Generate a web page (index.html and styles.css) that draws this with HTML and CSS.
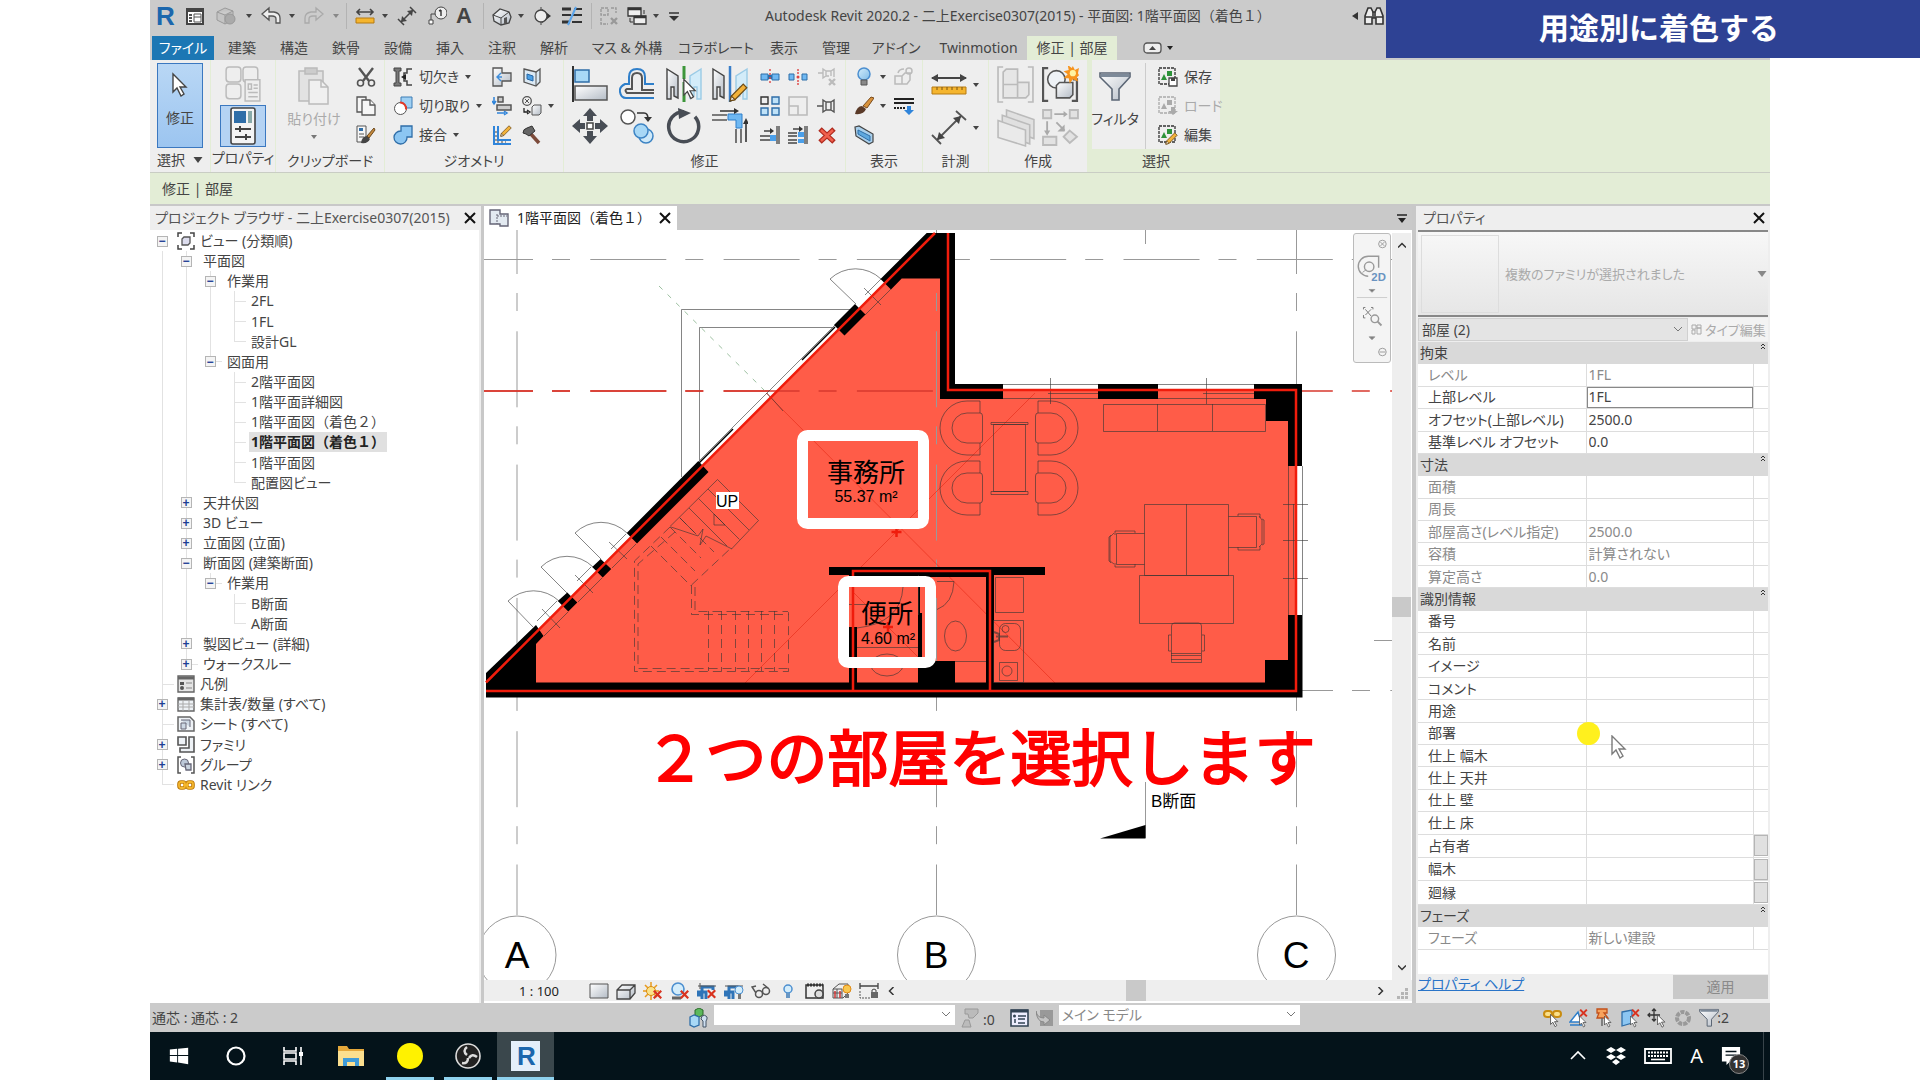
FILE: index.html
```html
<!DOCTYPE html>
<html lang="ja">
<head>
<meta charset="UTF-8">
<meta name="viewport" content="width=device-width, initial-scale=1.0">
<title>Autodesk Revit 2020.2</title>
<link rel="stylesheet" href="styles.css">
</head>
<body>

<!-- Shared icon shapes -->
<svg class="defs" aria-hidden="true">
  <defs>
    <linearGradient id="steel" x1="0" y1="0" x2="1" y2="1"><stop offset="0" stop-color="#fff"/><stop offset="1" stop-color="#b4bcc6"/></linearGradient>
    <linearGradient id="sky" x1="0" y1="0" x2="1" y2="1"><stop offset="0" stop-color="#d4edfb"/><stop offset="1" stop-color="#7fbce8"/></linearGradient>
    <symbol id="cursor" viewBox="0 0 16 24"><path d="M1 1v18l4-4 4 8 3-2-4-7h6z" fill="#fff" stroke="#444" stroke-width="1.4"/></symbol>
    <symbol id="down" viewBox="0 0 6 4"><path d="M0 0h6L3 4z" fill="currentColor"/></symbol>
    <symbol id="upup" viewBox="0 0 6 8"><path d="M1 4l2-2 2 2M1 7l2-2 2 2" fill="none" stroke="#333"/></symbol>
    <symbol id="cross" viewBox="0 0 12 12"><path d="M1 1l10 10M11 1L1 11" stroke="currentColor" stroke-width="2" fill="none"/></symbol>
    <symbol id="redx" viewBox="0 0 12 12"><path d="M1 1l10 10M11 1L1 11" stroke="#d8321f" stroke-width="3"/></symbol>
    <symbol id="pencil" viewBox="0 0 16 16"><path d="M1 15l1-4L12 1l3 3L5 14z" fill="#f2b23a" stroke="#6c4a16"/><path d="M1 15l1-4 3 3z" fill="#fff" stroke="#6c4a16"/></symbol>
    <symbol id="funnel" viewBox="0 0 32 30"><path d="M1 1h30v4L20 17v11h-7V17L1 5z" fill="url(#steel)" stroke="#5b6675" stroke-width="1.6"/><path d="M2 2h28v3H2z" fill="#7d8a99"/></symbol>
    <symbol id="bulb" viewBox="0 0 16 20"><circle cx="8" cy="7" r="6" fill="url(#sky)" stroke="#4c8fd0" stroke-width="1.5"/><path d="M5 13h6v5H5z" fill="#888" stroke="#555"/></symbol>
  </defs>
</svg>

<div class="app">

  <!-- Title bar -->
  <header class="titlebar">
    <nav class="qat" aria-label="クイック アクセス">
      <svg class="logo" viewBox="0 0 24 30"><text x="2" y="24" class="logo-r">R</text></svg>
      <button aria-label="ホーム"><svg viewBox="0 0 20 20"><path d="M2 3h16v15H2z" fill="#fff" stroke="#444" stroke-width="2"/><path d="M2 3h16v3H2z" fill="#444"/><path d="M4 9h3M4 12h3M4 15h3" stroke="#555" stroke-width="2"/><path d="M9 8h7v8H9zM9 11h7" fill="none" stroke="#555"/></svg></button>
      <button aria-label="保存"><svg viewBox="0 0 20 20"><path d="M1 6l8-4 8 3v9l-8 4-8-4zM1 6l8 3 8-4M9 9v9" fill="#c4c4c4" stroke="#999"/><circle cx="14" cy="13" r="5" fill="#aaa" stroke="#999"/></svg></button>
      <button aria-label="保存メニュー" class="arr"><svg><use href="#down"/></svg></button>
      <button aria-label="元に戻す"><svg viewBox="0 0 20 20"><path d="M1 8l7-6v4h5q6 1 6 6v5h-4v-4q0-3-4-3H8v4z" fill="#eee" stroke="#555" stroke-width="1.3"/></svg></button>
      <button aria-label="履歴" class="arr"><svg><use href="#down"/></svg></button>
      <button aria-label="やり直し"><svg viewBox="0 0 20 20"><path d="M19 8l-7-6v4H7q-6 1-6 6v5h4v-4q0-3 4-3h3v4z" fill="#ccc" stroke="#aaa" stroke-width="1.3"/></svg></button>
      <button aria-label="やり直し履歴" class="arr dim"><svg><use href="#down"/></svg></button>
      <span class="sep"></span>
      <button aria-label="計測"><svg viewBox="0 0 20 20"><path d="M2 6h16M5 3L2 6l3 3M15 3l3 3-3 3" fill="none" stroke="#444" stroke-width="1.6"/><path d="M1 12h18v5H1z" fill="#f5b52e" stroke="#b57a12"/></svg></button>
      <button aria-label="計測メニュー" class="arr"><svg><use href="#down"/></svg></button>
      <button aria-label="寸法"><svg viewBox="0 0 20 20"><path d="M4 16L16 4M1 13l6 6M13 1l6 6" stroke="#444" stroke-width="1.5"/><path d="M4 16l1-6 5 5zM16 4l-1 6-5-5z" fill="#444"/></svg></button>
      <button aria-label="タグ"><svg viewBox="0 0 20 20"><circle cx="14" cy="7" r="6" fill="#eee" stroke="#444"/><path d="M14 4v6M12 5l2-1" stroke="#333" stroke-width="1.4"/><path d="M8 8H4v6" fill="none" stroke="#444"/><path d="M2 14h4v4H2z" fill="#fff" stroke="#444"/></svg></button>
      <button aria-label="文字" class="letter">A</button>
      <span class="sep"></span>
      <button aria-label="3D ビュー"><svg viewBox="0 0 20 20"><path d="M1 9l7-6 9 3 2 5-2 6-8 2-7-4z" fill="url(#steel)" stroke="#444" stroke-width="1.3"/><path d="M1 9l8 3 8-6M9 12v7" fill="none" stroke="#444"/><path d="M12 12l3-1v6l-3 1z" fill="#555"/></svg></button>
      <button aria-label="3D メニュー" class="arr"><svg><use href="#down"/></svg></button>
      <button aria-label="断面"><svg viewBox="0 0 20 20"><path d="M9 3l9 7-9 7z" fill="#333"/><circle cx="8" cy="10" r="6" fill="#eee" stroke="#444" stroke-width="1.3"/><path d="M8 1v3M8 16v3" stroke="#444"/></svg></button>
      <button aria-label="細線"><svg viewBox="0 0 20 20"><path d="M0 3h9M0 16h8" stroke="#333" stroke-width="3"/><path d="M0 9h9M12 3h8M11 9h9M10 16h10" stroke="#333" stroke-width="2"/><path d="M14 1L6 19" stroke="#5aa5ec" stroke-width="2"/></svg></button>
      <span class="sep"></span>
      <button aria-label="非表示を閉じる"><svg viewBox="0 0 20 20"><path d="M2 2h7v7H2zM12 2h5v5M2 12v6h7" fill="none" stroke="#999" stroke-width="1.4" stroke-dasharray="3 1"/><path d="M12 12l6 6M18 12l-6 6" stroke="#999" stroke-width="2.4"/></svg></button>
      <button aria-label="ウィンドウ切替"><svg viewBox="0 0 20 20"><path d="M1 2h13v8H1zM7 10h12v8H7z" fill="#eee" stroke="#333" stroke-width="1.3"/><path d="M1 3h13M7 11h12" stroke="#333" stroke-width="2.4"/><path d="M3 12v4h3M17 8V4" fill="none" stroke="#333"/></svg></button>
      <button aria-label="切替メニュー" class="arr"><svg><use href="#down"/></svg></button>
      <button aria-label="カスタマイズ"><svg viewBox="0 0 20 20"><path d="M5 7h10" stroke="#333" stroke-width="1.5"/><path d="M5 10h10l-5 5z" fill="#333"/></svg></button>
    </nav>
    <h1 class="doc-title fw">Autodesk Revit 2020.2 - 二上Exercise0307(2015) - 平面図: 1階平面図（着色１）</h1>
    <div class="search">
      <svg width="6" height="8" viewBox="0 0 6 8"><path d="M6 0v8L0 4z" fill="#333"/></svg>
      <svg width="20" height="20" viewBox="0 0 20 20"><path d="M1 18V10L4 2h3l2 4h2l2-4h3l3 8v8h-7v-6H8v6z" fill="#eee" stroke="#333" stroke-width="1.6"/><path d="M1 11h7M12 11h7M9 6v6M11 6v6" stroke="#333" stroke-width="1.6"/></svg>
    </div>
  </header>

  <!-- Ribbon tabs -->
  <nav class="tabs" aria-label="リボン">
    <button class="file">ファイル</button>
    <button>建築</button><button>構造</button><button>鉄骨</button><button>設備</button><button>挿入</button><button>注釈</button><button>解析</button>
    <button>マス &amp; 外構</button><button>コラボレート</button><button>表示</button><button>管理</button><button>アドイン</button><button>Twinmotion</button>
    <button class="current">修正 | 部屋</button>
    <button class="ribbon-toggle" aria-label="リボン表示"><svg width="30" height="12" viewBox="0 0 30 12"><rect x="1" y="1" width="17" height="10" rx="3" fill="#eee" stroke="#555" stroke-width="1.3"/><path d="M6 8h7L9.500 4z" fill="#444"/><path d="M24 4h6l-3 4z" fill="#222"/></svg></button>
  </nav>

  <!-- Ribbon -->
  <div class="ribbon">
    <section class="panel w60">
      <div class="tools center">
        <button class="modify"><svg width="16" height="26"><use href="#cursor"/></svg><span>修正</span></button>
      </div>
      <h2>選択 <svg class="tri"><use href="#down"/></svg></h2>
    </section>

    <section class="panel w64">
      <div class="tools col2 center">
        <button aria-label="タイプ プロパティ"><svg width="38" height="38" viewBox="0 0 36 36" fill="#eee" stroke="#bbb" stroke-width="1.400"><rect x="2" y="2" width="14" height="14" rx="3"/><rect x="18" y="2" width="14" height="14" rx="3"/><rect x="2" y="18" width="14" height="14" rx="3"/><path d="M20 14h14v20H20z"/><path d="M23 18h3v5h-3zM28 19h4M28 22h4M23 26h9M23 30h9"/></svg></button>
        <button class="on" aria-label="プロパティ"><svg width="26" height="38" viewBox="0 0 26 38"><rect x="1" y="1" width="24" height="36" rx="2" fill="#f4f4f4" stroke="#444" stroke-width="1.600"/><path d="M4 4h12v12H4z" fill="#2f6ea8"/><path d="M18 4h4v12h-4z" fill="#8aa"/><path d="M5 22h16M5 30h16M10 19v6M16 27v6" stroke="#444" stroke-width="2"/></svg></button>
      </div>
      <h2>プロパティ</h2>
    </section>

    <section class="panel w108">
      <div class="tools">
        <button class="paste" disabled><svg width="34" height="38" viewBox="0 0 34 38" fill="#e2e2e2" stroke="#bbb" stroke-width="1.500"><path d="M2 4h24v30H2z"/><path d="M8 1h12v6H8z" fill="#ccc"/><path d="M12 13h12l7 7v17H12z" fill="#f0f0f0"/><path d="M24 13v7h7" fill="none"/></svg><span>貼り付け</span><svg class="tri"><use href="#down"/></svg></button>
        <div class="col w28">
          <button aria-label="切り取り"><svg viewBox="0 0 20 20"><path d="M3 1l10 13M17 1L7 14" stroke="#555" stroke-width="2.400"/><circle cx="4.500" cy="16" r="3" fill="none" stroke="#555" stroke-width="1.600"/><circle cx="15.500" cy="16" r="3" fill="none" stroke="#555" stroke-width="1.600"/></svg></button>
          <button aria-label="コピー"><svg viewBox="0 0 20 20" fill="#f6f6f6" stroke="#555" stroke-width="1.300"><path d="M1 1h9v15H1z"/><path d="M6 4h8l5 5v10H6z"/><path d="M14 4v5h5"/></svg></button>
          <button aria-label="プロパティを一致"><svg viewBox="0 0 20 20"><path d="M1 1h9v16H1z" fill="#f6f6f6" stroke="#555"/><path d="M3 3h4v3H3z" fill="#2f6ea8"/><path d="M3 9h5M3 12h5" stroke="#555"/><path d="M11 11L18 3l1 2-6 8z" fill="#c78b3c" stroke="#6b471b"/><path d="M5 18q1-7 6-7l3 3q-2 5-9 4z" fill="#444"/></svg></button>
        </div>
      </div>
      <h2>クリップボード</h2>
    </section>

    <section class="panel w178 pad8">
      <div class="tools">
        <div class="col w99">
          <button><svg viewBox="0 0 20 20"><path d="M1 1h7v3H6v12h2v3H1v-3h2V4H1z" fill="#777" stroke="#444"/><path d="M19 2h-5v4h-3v8h3v4h5" fill="none" stroke="#444" stroke-width="1.500"/><path d="M8 10l5-3v6z" fill="#222"/></svg>切欠き<svg class="car"><use href="#down"/></svg></button>
          <button><svg viewBox="0 0 20 20"><path d="M8 1h11v11H8z" fill="#9fd0f3" stroke="#3d7db5"/><circle cx="7.500" cy="12.500" r="6" fill="#fff" stroke="#555"/><path d="M7 6.500a6 6 0 0 1 6 7" fill="none" stroke="#e23a2a" stroke-width="2"/></svg>切り取り<svg class="car"><use href="#down"/></svg></button>
          <button><svg viewBox="0 0 20 20"><path d="M8 1h11v11h-5a6.500 6.500 0 1 1-6-6z" fill="#8cc6f2" stroke="#2f6ea8" stroke-width="1.300"/></svg>接合<svg class="car"><use href="#down"/></svg></button>
        </div>
        <div class="col w30">
          <button aria-label="結合"><svg viewBox="0 0 20 20"><path d="M1 1h9v5h9v8h-9v5H1z" fill="url(#steel)" stroke="#555" stroke-width="1.300"/><path d="M9 6l-4 4 4 4M5 10h5" fill="none" stroke="#3c8ddb" stroke-width="1.400"/></svg></button>
          <button aria-label="分割面"><svg viewBox="0 0 20 20"><path d="M2 1v6M0 5l2 3 2-3M5 17h8M12 15l3 2-3 2" fill="none" stroke="#2f84da" stroke-width="1.500"/><path d="M6 1h5v5H6zM5 9h14v5H5z" fill="#ccc" stroke="#555" stroke-width="1.500"/></svg></button>
          <button aria-label="壁結合"><svg viewBox="0 0 20 20"><path d="M2 1v18h17M6 1v14h13" fill="none" stroke="#2f84da" stroke-width="2"/><path d="M4 6v11h10" fill="none" stroke="#444" stroke-dasharray="2 2"/><g transform="translate(8 0) scale(.75)"><use href="#pencil" width="16" height="16"/></g></svg></button>
        </div>
        <div class="col w36">
          <button aria-label="面"><svg viewBox="0 0 20 20"><path d="M2 2l12 3 4-3v13l-4 4-12-4z" fill="#dbe9f4" stroke="#555" stroke-width="1.300"/><path d="M14 5v14" stroke="#555"/><path d="M5 7l6 2v5l-6-2z" fill="#4aa0e6" stroke="#2666a5"/></svg></button>
          <button><svg viewBox="0 0 20 20"><circle cx="5" cy="5" r="4.300" fill="none" stroke="#555" stroke-width="1.300"/><path d="M3 3l4 4M7 3L3 7" stroke="#555"/><path d="M2 12v4h4M5 14l3 2-3 2" fill="none" stroke="#222" stroke-width="1.300"/><path d="M10 11l2-2h7v8l-2 2h-7z" fill="url(#steel)" stroke="#555"/></svg><svg class="car"><use href="#down"/></svg></button>
          <button aria-label="解体"><svg viewBox="0 0 20 20"><path d="M8 8l9 10" stroke="#7c4b3a" stroke-width="3.500"/><path d="M1 8q0-4 4-5l5-2 3 5-6 5-3-2z" fill="#666" stroke="#333"/></svg></button>
        </div>
      </div>
      <h2>ジオメトリ</h2>
    </section>

    <section class="panel w281 pad8">
      <div class="tools">
        <div class="big8">
          <button aria-label="位置合わせ"><svg viewBox="0 0 36 36"><path d="M1 0v36" stroke="#333" stroke-width="2"/><path d="M3 4h14v12H3z" fill="#a8d8f6" stroke="#2f6ea8" stroke-width="1.500"/><path d="M3 20h32v14H3z" fill="url(#steel)" stroke="#555" stroke-width="1.500"/></svg></button>
          <button aria-label="オフセット"><svg viewBox="0 0 36 36"><path d="M35 18h-9v-7q0-8-8-8t-8 8v7H6q-6 3-5 8 1 6 6 6h28" fill="none" stroke="#2f7fca" stroke-width="2"/><path d="M35 24H23V12q0-5-5-5t-5 5v11H8q-3 1 0 4h27" fill="none" stroke="#555" stroke-width="2"/></svg></button>
          <button aria-label="鏡像化 - 軸を選択"><svg viewBox="0 0 36 36"><path d="M1 3l11 7v22l-4-2v-9H5v12H1z" fill="url(#steel)" stroke="#444" stroke-width="1.400"/><path d="M35 3l-11 7v22l4-2v-9h3v12h4z" fill="#d3ecf9" stroke="#9bcbe6" stroke-width="1.400"/><path d="M18 0v36" stroke="#3d963a" stroke-width="3" stroke-dasharray="13 3 20"/><g transform="translate(17 12)"><use href="#cursor" width="14" height="22"/></g></svg></button>
          <button aria-label="鏡像化 - 軸を描画"><svg viewBox="0 0 36 36"><path d="M1 3l11 7v22l-4-2v-9H5v12H1z" fill="url(#steel)" stroke="#444" stroke-width="1.400"/><path d="M35 3l-11 7v22l4-2v-9h3v12h4z" fill="#d3ecf9" stroke="#9bcbe6" stroke-width="1.400"/><path d="M18 0v36" stroke="#3a7fc9" stroke-width="2.500"/><g transform="translate(17 17)"><use href="#pencil" width="19" height="19"/></g></svg></button>
          <button aria-label="移動"><svg viewBox="0 0 36 36"><path d="M18 0l7 8h-4v5h-6V8h-4zM18 36l-7-8h4v-5h6v5h4zM0 18l8-7v4h5v6H8v4zM36 18l-8 7v-4h-5v-6h5v-4z" fill="#484d55"/><path d="M15 15h6v6h-6z" fill="#fff" stroke="#444" stroke-width="1.500"/></svg></button>
          <button aria-label="コピー移動"><svg viewBox="0 0 36 36"><circle cx="9" cy="9" r="7" fill="#fff" stroke="#555" stroke-width="1.500"/><path d="M18 5h7q4 0 4 6" fill="none" stroke="#333" stroke-width="1.600"/><path d="M25 9h8l-4 5z" fill="#333"/><circle cx="27" cy="28" r="7" fill="#cfe9f9" stroke="#3d84c4" stroke-width="1.500"/><circle cx="22" cy="23" r="7" fill="#a8d8f6" stroke="#3d84c4" stroke-width="1.500"/></svg></button>
          <button aria-label="回転"><svg viewBox="0 0 36 36"><path d="M24 5A15 15 0 1 1 12 5" fill="none" stroke="#484d55" stroke-width="3.500" transform="rotate(25 18 18)"/><path d="M12 0l13 5-12 6z" fill="#484d55"/></svg></button>
          <button aria-label="トリム/延長"><svg viewBox="0 0 36 36"><path d="M0 7h15M0 12h15M24 21v14M29 21v14" stroke="#555" stroke-width="1.600"/><path d="M16 6h14v14h-6v-8h-8z" fill="#6fb8f2" stroke="#2f7fca"/><path d="M8 3h16M34 34V14" stroke="#333" stroke-width="1.600"/><path d="M22 0l5 3-5 3zM31 16l3-6 3 6z" fill="#333"/></svg></button>
        </div>
        <div class="col w29">
          <button aria-label="要素を分割"><svg viewBox="0 0 20 20"><path d="M1 7h7v6H1zM12 7h7v6h-7z" fill="#6fb8f2" stroke="#2f6ea8"/><path d="M8 10h4" stroke="#2f6ea8" stroke-width="4"/><path d="M10 2v16" stroke="#d44" stroke-width="1.400" stroke-dasharray="2 2"/></svg></button>
          <button aria-label="配列"><svg viewBox="0 0 20 20" fill="#bfe2f8" stroke="#2f6ea8" stroke-width="1.400"><path d="M1 1h7v7H1z" fill="#eee" stroke="#333"/><path d="M12 1h7v7h-7zM1 12h7v7H1zM12 12h7v7h-7z"/></svg></button>
          <button aria-label="単一要素を延長"><svg viewBox="0 0 20 20"><path d="M0 11h10M0 15h10M17 1v18M19 1v18M4 6h8" stroke="#444" stroke-width="1.300"/><path d="M10 3l4 3-4 3z" fill="#333"/><path d="M10 10h6v6h-6z" fill="#4a9fea"/></svg></button>
        </div>
        <div class="col w30">
          <button aria-label="隙間で分割"><svg viewBox="0 0 20 20"><path d="M1 7h5v6H1zM14 7h5v6h-5z" fill="#6fb8f2" stroke="#2f6ea8"/><circle cx="10" cy="10" r="1.500" fill="#d44"/><path d="M10 2v5M10 13v5" stroke="#d44" stroke-width="1.400" stroke-dasharray="2 1"/></svg></button>
          <button aria-label="尺度"><svg viewBox="0 0 20 20" fill="none" stroke="#bbb" stroke-width="1.600"><path d="M1 1h18v18H1zM1 10h9v9"/></svg></button>
          <button aria-label="複数要素を延長"><svg viewBox="0 0 20 20"><path d="M0 8h9M0 11h9M0 15h9M0 18h9M17 1v18M19 1v18M5 4h8" stroke="#444" stroke-width="1.300"/><path d="M11 1l4 3-4 3z" fill="#333"/><path d="M10 7h6v5h-6zM10 14h6v4h-6z" fill="#4a9fea"/></svg></button>
        </div>
        <div class="col w29">
          <button aria-label="ピン解除"><svg viewBox="0 0 20 20" fill="none" stroke="#bbb" stroke-width="1.400"><path d="M1 6h5V2l3 2h5l3-2v8M6 6v5l3-2h3M9 4v5M14 4v5"/><path d="M12 12l6 6M18 12l-6 6" stroke-width="2.400"/></svg></button>
          <button aria-label="ピン"><svg viewBox="0 0 20 20" fill="none" stroke="#555" stroke-width="1.400"><path d="M0 10h6V4l3 2h5l3-2v12l-3-2H9l-3 2v-6M9 6v8M14 6v8"/></svg></button>
          <button aria-label="削除"><svg viewBox="0 0 20 20"><path d="M3 4l14 13M17 4L3 17" stroke="#b02a1e" stroke-width="5"/><path d="M4 5l12 11M16 5L4 16" stroke="#f0604d" stroke-width="2.500"/></svg></button>
        </div>
      </div>
      <h2>修正</h2>
    </section>

    <section class="panel w76 pad8">
      <div class="tools">
        <div class="col w42">
          <button aria-label="表示"><svg viewBox="0 0 20 20"><use href="#bulb"/></svg><svg class="car"><use href="#down"/></svg></button>
          <button aria-label="上書き"><svg viewBox="0 0 20 20"><path d="M9 10L17 1l3 1-7 10z" fill="#d8923c" stroke="#7a4b1c"/><path d="M1 18q2-8 7-8l4 3q-2 6-11 5z" fill="#5a3a28"/></svg><svg class="car"><use href="#down"/></svg></button>
          <button aria-label="選択ボックス"><svg viewBox="0 0 20 20"><path d="M1 2l4-1 14 8v8l-4 2L2 11z" fill="#a9cfeb" stroke="#444" stroke-width="1.200"/><path d="M4 5l12 6v5L4 9z" fill="#5fa8de" stroke="#2f6ea8"/></svg></button>
        </div>
        <div class="col w30">
          <button aria-label="置換"><svg viewBox="0 0 20 20" fill="none" stroke="#bbb" stroke-width="1.500"><path d="M1 9h7v8H1zM8 9l3-3h5v7l-3 4H8"/><circle cx="15" cy="4" r="3"/><path d="M4 6q1-4 6-4"/></svg></button>
          <button aria-label="線種変更"><svg viewBox="0 0 20 20"><path d="M0 3h20" stroke="#222" stroke-width="2"/><path d="M0 7h20" stroke="#222" stroke-width="2"/><path d="M0 12h12" stroke="#222" stroke-width="2" stroke-dasharray="2 1"/><path d="M13 10h4v4h3l-5 5-5-5h3z" fill="#2f84da"/></svg></button>
          <span></span>
        </div>
      </div>
      <h2>表示</h2>
    </section>

    <section class="panel w65 pad8">
      <div class="tools">
        <div class="col2 measure">
          <button aria-label="2 点間を計測"><svg viewBox="0 0 36 36"><path d="M1 11h34" stroke="#444" stroke-width="2"/><path d="M0 11l7-4v8zM36 11l-7-4v8z" fill="#444"/><path d="M1 20h34v7H1z" fill="#f5b52e" stroke="#b57a12"/><path d="M6 20v3M11 20v3M16 20v3M21 20v3M26 20v3M31 20v3" stroke="#7a5410"/></svg><svg class="car"><use href="#down"/></svg></button>
          <button aria-label="平行寸法"><svg viewBox="0 0 36 36"><path d="M6 30L30 6M1 25l9 9M25 1l10 9" stroke="#555" stroke-width="1.800"/><path d="M6 30l2-8 6 6zM30 6l-2 8-6-6z" fill="#444"/></svg><svg class="car"><use href="#down"/></svg></button>
        </div>
      </div>
      <h2>計測</h2>
    </section>

    <section class="panel w98 pad8">
      <div class="tools">
        <div class="col2 w45">
          <button aria-label="アセンブリ"><svg width="37" height="37" viewBox="0 0 36 36" fill="#e6e6e6" stroke="#bbb" stroke-width="1.600"><path d="M6 1H1v34h5M30 1h5v34h-5" fill="none"/><path d="M6 6l3-3h11v13h11v12l-3 3H6zM6 18h14v13M20 18v-2" /></svg></button>
          <button aria-label="パーツ"><svg width="38" height="38" viewBox="0 0 36 36" fill="#e0e0e0" stroke="#bbb" stroke-width="1.500"><path d="M9 1l26 9v18l-26-9z"/><path d="M5 6l26 9v18L5 24z"/><path d="M1 11l26 9v15L1 27z" fill="#eaeaea"/></svg></button>
        </div>
        <div class="col2 w45">
          <button aria-label="グループを作成"><svg width="37" height="37" viewBox="0 0 36 36"><path d="M6 2H1v32h5M30 13h4v21h-5" fill="none" stroke="#555" stroke-width="2.200"/><circle cx="14" cy="13" r="8.500" fill="#eef2f6" stroke="#555" stroke-width="1.500"/><path d="M14 19l3-3h13v12l-3 3H14z" fill="url(#steel)" stroke="#555" stroke-width="1.500"/><path d="M30 0l2 4 4-2-1 5 1 2-2 2 1 4-5-2-3 4-1-5-5 0 4-4-4-3 5-1-1-5 4 3z" fill="#f7941d"/><circle cx="30" cy="7" r="3" fill="#fff3a0"/></svg></button>
          <button aria-label="類似を作成"><svg width="37" height="37" viewBox="0 0 36 36" fill="#e2e2e2" stroke="#bbb" stroke-width="1.800"><path d="M1 1h8v8H1zM27 1h8v8h-8zM1 27h13v8H1zM27 21l7 6-7 6-6-6z"/><path d="M12 5h11M5 12v11M14 13l8 8" stroke="#aaa"/><path d="M21 2l4 3-4 3zM2 21l3 5 3-5zM22 15v7h-7z" fill="#aaa" stroke="none"/></svg></button>
        </div>
      </div>
      <h2>作成</h2>
    </section>

    <section class="panel last w128">
      <div class="tools">
        <button class="filter"><svg width="32" height="30"><use href="#funnel"/></svg><span>フィルタ</span></button>
        <div class="col selset">
          <button><svg viewBox="0 0 20 20"><path d="M1 1h16v16H1z" fill="none" stroke="#333" stroke-width="1.300" stroke-dasharray="3 1"/><path d="M3 13l3-6 3 6zM9 4h5v5H9z" fill="#2c9239"/><path d="M11 11h8v8h-8z" fill="#fff" stroke="#444" stroke-width="1.300"/><path d="M13 11h4v3h-4z" fill="#444"/></svg>保存</button>
          <button disabled><svg viewBox="0 0 20 20"><path d="M1 1h16v16H1z" fill="none" stroke="#aaa" stroke-width="1.300" stroke-dasharray="3 1"/><path d="M3 13l3-6 3 6zM9 4h5v5H9zM13 11h4v4h3l-5 4-5-4h3z" fill="#aaa"/></svg>ロード</button>
          <button><svg viewBox="0 0 20 20"><path d="M1 1h16v16H1z" fill="none" stroke="#333" stroke-width="1.300" stroke-dasharray="3 1"/><path d="M3 13l3-6 3 6zM9 4h5v5H9z" fill="#2c9239"/><g transform="translate(7 7)"><use href="#pencil" width="13" height="13"/></g></svg>編集</button>
        </div>
      </div>
      <h2>選択</h2>
    </section>
  </div>

  <div class="optionsbar">修正 | 部屋</div>

  <main class="work">

    <!-- Project browser -->
    <aside class="browser">
      <header class="pane-head"><h2>プロジェクト ブラウザ - 二上Exercise0307(2015)</h2><button aria-label="閉じる"><svg class="x"><use href="#cross"/></svg></button></header>
      <ul class="tree">
        <li><i><button>−</button></i><svg class="ti" viewBox="0 0 18 18"><path d="M1 5V1h4M13 1h4v4M17 13v4h-4M5 17H1v-4" fill="none" stroke="#444" stroke-width="1.500"/><path d="M5 7l2-2h6v6l-2 2H5z" fill="#dde" stroke="#555" stroke-width="1.300"/></svg>ビュー (分類順)</li>
        <li><i class="v"></i><i class="v"><button>−</button></i>平面図</li>
        <li><i class="v"></i><i class="v"></i><i class="v"><button>−</button></i>作業用</li>
        <li><i class="v"></i><i class="v"></i><i class="v"></i><i class="v h"></i>2FL</li>
        <li><i class="v"></i><i class="v"></i><i class="v"></i><i class="v h"></i>1FL</li>
        <li><i class="v"></i><i class="v"></i><i class="v"></i><i class="e"></i>設計GL</li>
        <li><i class="v"></i><i class="v"></i><i class="e"><button>−</button></i>図面用</li>
        <li><i class="v"></i><i class="v"></i><i></i><i class="v h"></i>2階平面図</li>
        <li><i class="v"></i><i class="v"></i><i></i><i class="v h"></i>1階平面詳細図</li>
        <li class="fw"><i class="v"></i><i class="v"></i><i></i><i class="v h"></i>1階平面図（着色２）</li>
        <li class="fw"><i class="v"></i><i class="v"></i><i></i><i class="v h"></i><b>1階平面図（着色１）</b></li>
        <li><i class="v"></i><i class="v"></i><i></i><i class="v h"></i>1階平面図</li>
        <li><i class="v"></i><i class="v"></i><i></i><i class="e"></i>配置図ビュー</li>
        <li><i class="v"></i><i class="v"><button>+</button></i>天井伏図</li>
        <li><i class="v"></i><i class="v"><button>+</button></i>3D ビュー</li>
        <li><i class="v"></i><i class="v"><button>+</button></i>立面図 (立面)</li>
        <li><i class="v"></i><i class="v"><button>−</button></i>断面図 (建築断面)</li>
        <li><i class="v"></i><i class="v"></i><i class="e"><button>−</button></i>作業用</li>
        <li><i class="v"></i><i class="v"></i><i></i><i class="v h"></i>B断面</li>
        <li><i class="v"></i><i class="v"></i><i></i><i class="e"></i>A断面</li>
        <li><i class="v"></i><i class="v"><button>+</button></i>製図ビュー (詳細)</li>
        <li><i class="v"></i><i class="e"><button>+</button></i>ウォークスルー</li>
        <li><i class="v h"></i><svg class="ti" viewBox="0 0 18 18"><path d="M1 1h16v16H1z" fill="#e4e4e4" stroke="#666" stroke-width="1.400"/><path d="M1 3h16" stroke="#666" stroke-width="3"/><path d="M3 7h4v3H3z" fill="#555"/><circle cx="5" cy="13" r="2" fill="#555"/><path d="M9 8h6M9 13h6" stroke="#888"/></svg>凡例</li>
        <li><i class="v"><button>+</button></i><svg class="ti" viewBox="0 0 18 18"><path d="M1 3h16v13H1z" fill="#eef2f6" stroke="#666" stroke-width="1.400"/><path d="M1 4h16" stroke="#666" stroke-width="3"/><path d="M1 9h16M1 12h16M6 5v11M12 5v11" stroke="#aaa"/></svg>集計表/数量 (すべて)</li>
        <li><i class="v h"></i><svg class="ti" viewBox="0 0 18 18"><path d="M1 2h12l4 4v10H1z" fill="#eef2f6" stroke="#666" stroke-width="1.500"/><path d="M4 5h9v7M4 8h5v6H4z" fill="#cdd8e4" stroke="#667"/></svg>シート (すべて)</li>
        <li><i class="v"><button>+</button></i><svg class="ti" viewBox="0 0 18 18"><path d="M1 1h8v8H1zM12 1h5v15H3v-4h9z" fill="#eef2f6" stroke="#555" stroke-width="1.600"/></svg>ファミリ</li>
        <li><i class="v"><button>+</button></i><svg class="ti" viewBox="0 0 18 18"><path d="M4 1H1v16h3M14 1h3v16h-3" fill="none" stroke="#555" stroke-width="1.500"/><circle cx="7.500" cy="7" r="4" fill="#bcc8d8" stroke="#667"/><path d="M8 8h6v6H9z" fill="#c8d2de" stroke="#667" stroke-width="1.300"/></svg>グループ</li>
        <li><i class="e"></i><svg class="ti" viewBox="0 0 18 18"><g fill="none" stroke="#b9770b" stroke-width="3.600"><rect x="2" y="6" width="6" height="6" rx="2"/><rect x="10" y="6" width="6" height="6" rx="2"/></g><g fill="none" stroke="#f4b62c" stroke-width="1.800"><rect x="2" y="6" width="6" height="6" rx="2"/><rect x="10" y="6" width="6" height="6" rx="2"/><path d="M6 9h6"/></g></svg>Revit リンク</li>
      </ul>
    </aside>

    <!-- Drawing view -->
    <section class="view">
      <header class="view-tabs">
        <div class="view-tab fw"><svg width="20" height="18" viewBox="0 0 20 18"><path d="M1 1h10v4h8v12h-8v-2H1z" fill="#e3eaf1" stroke="#667" stroke-width="1.400"/><path d="M8 5v10M8 7h10" stroke="#667" stroke-dasharray="2 1"/></svg><span>1階平面図（着色１）</span><button aria-label="タブを閉じる"><svg class="x"><use href="#cross"/></svg></button></div>
        <button aria-label="タブ一覧" class="tab-list"><svg width="10" height="9" viewBox="0 0 10 9"><path d="M0 1h10" stroke="#222" stroke-width="1.500"/><path d="M1 4h8L5 9z" fill="#222"/></svg></button>
      </header>
      <div class="view-body">
        <div class="canvas">
          <svg class="plan" viewBox="484 230 908 750">
            <!-- Grid lines -->
            <g class="grid">
              <path d="M457 259.500H1392M1257 690.500H1392"/>
              <path d="M517 198V915M1296.500 198V915"/>
              <path d="M1145.500 230V244M1145.500 782V838M1374 640.500H1392"/>
            </g>
            <path class="grid red" d="M457 391H1392"/>

            <!-- Balcony -->
            <path class="thin" d="M850 309.500H681.500V477M835 327.500H699.500V462"/>
            <path d="M659 286L767 393" stroke="#9cc0a0" stroke-dasharray="5 7" fill="none"/>

            <!-- Rooms -->
            <path d="M927 233H948V390H1296V691H486V674Z" fill="#fff"/>
            <path d="M935 233H948V390H1296V691H486V682.500Z" fill="#ff5c48"/>
            <path class="grid" d="M936.500 198V915"/>
            <path class="grid red" d="M457 391H936"/>
            <path class="diag" d="M738 690L1035 393M766 393L1062 690M853 592L952 691"/>
            <path class="thin" d="M767 393L783 411"/>

            <!-- Stairs -->
            <g class="thin">
              <path d="M670 526.500L717.500 479.500L758.500 520.500L731.500 549M708 489l41 41M698.500 498.500l41 41M689 508l38 38M679.500 517.500l15 15"/>
              <path d="M671 527l27 9 5-7-3 16 6-9 26 13M714 514v11h11z"/>
              <g stroke-dasharray="9 5">
                <path d="M670 527L634.500 561V671.500H788.500V611.500M675 532L638 564V668.500H788M691.500 585V614.500H788.500M695 587V611.500H788M691.500 585L731 548"/>
                <path d="M708.500 611V671M721.500 611V671M735.500 611V671M748.500 611V671M761.500 611V671M774.500 611V671M661 537l34 34M670 527l31 31M651 546l40 40M680 518l34 34"/>
              </g>
            </g>

            <!-- Walls -->
            <g class="wall">
              <path d="M926.700 233L880.500 279L891 289.500L901.700 278.500H940V399H1003V384H955V233Z"/>
              <path d="M1098 384h60v15h-60zM1254 384H1302V466H1288V421H1266V399H1254Z"/>
              <path d="M486 673L536 625L543.500 636L536 644V682.500H1265V660H1288V615H1302.500V697.500H486Z"/>
              <path d="M834 325l21-21 10.500 10.500-21 21zM698.300 461L626.700 533L637 543.500L708.500 472z"/>
              <path d="M600.700 559l-8.500 8 10.500 10.500 8.500-8.500zM567.300 592.500l-9.500 8.500 10.500 10.500 9-9z"/>
              <path d="M829 567H1045V575H829ZM986 575h8v108h-8zM849 627h8v56h-8zM849 575h140v2H849zM918 575h2v38h2v48h33v22h-37z"/>
            </g>
            <path d="M835 327L802 360M733 429L699 463" stroke="#000" stroke-width="1.500"/>
            <path class="thin" d="M835 325L699 461M881 279L865 295M626 534L611 549M591 567L577 581M557 601L537 621"/>
            <path class="thin" d="M891 289L865 315M636 544L612 568M602 578L578 602M568 612L544 636"/>
            <g class="thin">
              <path d="M856 304L830 279A37 37 0 0 1 881 279M601 559L575 533A37 37 0 0 1 627 533M567 593L541 567A37 37 0 0 1 593 567M533 627L508 601A37 37 0 0 1 559 601"/>
              <path d="M864 288l17 17M609 542l18 17M575 575l18 18M542 609l18 19"/>
              <path d="M1003 384.500h95M1158 384.500h96M1048 393.500h50M1203 393.500h51M1003 398.500h95M1158 398.500h96M1050.500 378v26M1206.500 378v26"/>
              <path d="M1288.500 466v149M1293.500 504v75M1302.500 466v149M1283 504.500h25M1283 540.500h25M1283 578.500h25"/>
            </g>

            <!-- Furniture -->
            <g class="thin">
              <g id="chair"><path d="M980 413V401H967A27 27 0 0 0 967 455H980V443"/><path d="M967 413H980Q982.500 413 982.500 416V440Q982.500 443 980 443H967A15 15 0 0 1 967 413Z"/></g>
              <use href="#chair" y="60"/>
              <use href="#chair" transform="matrix(-1 0 0 1 2018 0)"/>
              <use href="#chair" transform="matrix(-1 0 0 1 2018 60)"/>
              <path d="M993.500 424.500H1025.500V491.500H993.500ZM991 422.500H1028V424.500H991ZM991 491.500H1028V494.500H991Z"/>
              <path d="M1103.500 404.500H1265.500V431.500H1103.500ZM1157.500 404V431M1212.500 404V431"/>
              <path d="M1144.500 504.500H1228.500V575.500H1144.500ZM1186.500 504V575M1139.500 575.500H1233.500V623.500H1139.500Z"/>
              <path d="M1228.500 516.500h28v31h-28M1238 516v-2h22v4M1238 547v3h22v-4M1262 519l2 1v24l-2 1M1259 516l3 4v24l-3 3"/>
              <path d="M1144.500 533.500h-28v31h28M1135 533v-2h-20v4M1135 564v3h-20v-4M1111 535l-2 2v24l2 2M1114 533l-4 4v24l4 3"/>
              <path d="M1171.500 662.500V626q0-3 3-3h24q3 0 3 3v36.500zM1171 653.500h30M1171 655.500h30M1171 659.500h30M1171 635h-2.500v16h2.500M1202 635h2.500v16h-2.500"/>
              <path d="M995.500 577.500h28v35h-28zM993.500 620.500h30v62h-30zM999.500 662.500h18v18h-18z"/>
              <rect x="999.500" y="623.500" width="21" height="27" rx="6"/><circle cx="1005.500" cy="629" r="3.500"/><circle cx="1007" cy="671" r="5"/>
              <path d="M994 632l5 2v6l-5 2M996 636.500h12" stroke-width="2"/>
              <ellipse cx="955.500" cy="636" rx="11" ry="15"/><ellipse cx="887" cy="665" rx="16" ry="11"/>
              <path d="M937 581.500h17q-1 22-17 28M857 647.500h61M955 661.500h31M849 604.500h20M903 587q-2 36-46 41M918.500 575v40"/>
            </g>

            <!-- Room boundaries -->
            <path class="bound" d="M935 233L486 682.500M486 691H1296V390H948V233M853 691V571H990V691"/>
            <path class="bound" d="M891.500 532h10M896.500 527v10M883 627h10M888 622v10"/>

            <!-- Frames and tags -->
            <rect class="frame" x="802.500" y="435.500" width="121" height="88" rx="5"/>
            <rect class="frame" x="843.500" y="581.500" width="87" height="81" rx="5"/>
            <text class="tag" x="866" y="482">事務所</text>
            <text class="area" x="866" y="502">55.37 m²</text>
            <text class="tag" x="887" y="623">便所</text>
            <text class="area" x="888" y="644">4.60 m²</text>
            <rect x="716" y="492" width="23" height="17" fill="#fff"/>
            <text class="up" x="727" y="507">UP</text>

            <!-- Grid bubbles -->
            <g fill="#fff" stroke="#999"><circle cx="517" cy="955" r="39"/><circle cx="936.500" cy="955" r="39"/><circle cx="1296.500" cy="955" r="39"/></g>
            <text class="bubble" x="517" y="968">A</text>
            <text class="bubble" x="936" y="968">B</text>
            <text class="bubble" x="1296" y="968">C</text>
            <path d="M1100 838.500L1145.500 825V838.500Z"/>
            <text class="section" x="1151" y="807">B断面</text>
            <text class="caption" x="980" y="781">２つの部屋を選択します</text>
          </svg>
          <div class="navbar">
            <svg viewBox="0 0 38 130" width="36" height="128" fill="none" stroke="#999">
              <circle cx="30" cy="8" r="4"/><path d="M28 6l4 4M32 6l-4 4"/>
              <path d="M15 42a10 10 0 1 1 0-21h11v12" stroke-width="1.500"/><circle cx="16" cy="32" r="5" stroke-width="1.500"/><path d="M9 38l4-3" />
              <text x="26" y="47" class="two-d">2D</text>
              <path d="M16 56h6l-3 3z" fill="#777"/><path d="M3 64.500h32" stroke="#ccc"/>
              <path d="M10 77v-2h2M18 75h2v2M10 83v3h2M12 77l6 7M18 77l-6 6" stroke="#777"/><circle cx="22" cy="87" r="4" stroke-width="1.500"/><path d="M25 90l4 4" stroke-width="2"/>
              <path d="M16 106h6l-3 3z" fill="#777"/><circle cx="30" cy="122" r="4"/><path d="M27 122h6"/>
            </svg>
          </div>
        </div>
        <div class="vscroll"><svg viewBox="0 0 8 5"><path d="M0 5l4-4 4 4"/></svg><span></span><svg viewBox="0 0 8 5"><path d="M0 0l4 4 4-4"/></svg></div>
      </div>
      <footer class="viewbar">
        <span class="scale">1 : 100</span>
        <div class="view-icons">
          <svg viewBox="0 0 20 18"><path d="M1 2h18v14H1z" fill="url(#steel)" stroke="#555"/></svg>
          <svg viewBox="0 0 20 18"><path d="M1 8l5-5h13v8l-5 6H1zM1 8h13v9M14 8l5-5" fill="url(#steel)" stroke="#444" stroke-width="1.300"/></svg>
          <svg viewBox="0 0 20 18"><path d="M8 0v18M0 9h16M2 3l12 12M14 3L2 15" stroke="#e89a1c" stroke-width="1.500"/><circle cx="8" cy="9" r="4.500" fill="#fbe38a" stroke="#d98c10"/><use href="#redx" x="10" y="8" width="9" height="9"/></svg>
          <svg viewBox="0 0 20 18"><circle cx="8" cy="7" r="6" fill="#d4edfb" stroke="#4c8fd0" stroke-width="1.600"/><path d="M2 16h9" stroke="#666" stroke-width="3"/><use href="#redx" x="10" y="8" width="9" height="9"/></svg>
          <svg viewBox="0 0 20 18"><path d="M5 17V5h11v3M0 10h9v7M0 13h5" fill="none" stroke="#2f74b8" stroke-width="3"/><path d="M3 1v6M1 4h18" stroke="#555"/><use href="#redx" x="10" y="7" width="9" height="10"/></svg>
          <svg viewBox="0 0 20 18"><path d="M5 17V5h8v3M0 10h9v7M0 13h5" fill="none" stroke="#2f74b8" stroke-width="3"/><path d="M1 4h18" stroke="#555"/><circle cx="15" cy="8" r="4" fill="#d4edfb" stroke="#4c8fd0"/><path d="M14 12h3v5h-3z" fill="#777"/></svg>
          <svg viewBox="0 0 20 18" fill="none" stroke="#555" stroke-width="1.500"><circle cx="8" cy="12" r="3.500"/><circle cx="15" cy="9" r="3.500"/><path d="M5 11L1 5l4-1M17 6l-5-4"/></svg>
          <svg viewBox="0 0 20 18"><circle cx="10" cy="7" r="4" fill="#d4edfb" stroke="#4c8fd0" stroke-width="1.500"/><path d="M8 11h4v5H8z" fill="#6796c4"/></svg>
          <svg viewBox="0 0 20 18"><path d="M1 3h17v13H1z" fill="#eee" stroke="#333" stroke-width="1.500"/><path d="M2 3h16" stroke="#333" stroke-width="3" stroke-dasharray="2 1"/><circle cx="14" cy="12" r="4" fill="#ddd" stroke="#444" stroke-width="1.500"/></svg>
          <svg viewBox="0 0 20 18"><path d="M1 7l6-5h9v9l-5 5H1zM1 7h9v9M5 7v9M1 11h9" fill="#eee" stroke="#555"/><path d="M3 9v7M8 9v7" stroke="#c33" stroke-width="1.500"/><circle cx="15" cy="7" r="4" fill="#f9c74f" stroke="#e08b17"/><path d="M13 12h4v4h-4z" fill="#777"/></svg>
          <svg viewBox="0 0 20 18"><path d="M1 1v6M19 1v6M1 4h18" stroke="#444" stroke-width="1.300"/><path d="M1 9v7h10" fill="none" stroke="#555" stroke-dasharray="2 1"/><path d="M12 10h7v6h-7z" fill="#666"/><path d="M13 10V8q2-2 4 0v2" fill="none" stroke="#444"/></svg>
        </div>
        <div class="hscroll"><svg viewBox="0 0 5 8"><path d="M5 0L1 4l4 4"/></svg><span></span><svg viewBox="0 0 5 8"><path d="M0 0l4 4-4 4"/></svg></div>
        <svg class="grip" width="11" height="11" viewBox="0 0 11 11"><path d="M8 0h3v3H8zM4 4h3v3H4zM8 4h3v3H8zM0 8h3v3H0zM4 8h3v3H4zM8 8h3v3H8z" fill="#b5b5b5"/></svg>
      </footer>
    </section>

    <!-- Properties -->
    <aside class="props">
      <header class="pane-head"><h2>プロパティ</h2><button aria-label="閉じる"><svg class="x"><use href="#cross"/></svg></button></header>
      <button class="type-selector" disabled><span class="thumb"></span><span class="type-name">複数のファミリが選択されました</span><svg class="tri"><use href="#down"/></svg></button>
      <div class="filter-row">
        <select aria-label="カテゴリ"><option>部屋 (2)</option></select>
        <button disabled><svg width="11" height="11" viewBox="0 0 11 11" fill="none" stroke="#aaa"><path d="M1 1h4v4H1zM6 1h4v3H6zM1 6h3v4H1zM6 4v6h4V4z"/></svg>タイプ編集</button>
      </div>
      <div class="prop-list">
        <table>
          <colgroup><col class="c-name"><col><col class="c-btn"></colgroup>
          <tbody>
            <tr class="group"><th colspan="2">拘束</th><td><svg><use href="#upup"/></svg></td></tr>
            <tr class="off"><th>レベル</th><td>1FL</td><td></td></tr>
            <tr><th><label for="p1">上部レベル</label></th><td class="active"><input id="p1" value="1FL"></td><td></td></tr>
            <tr><th><label for="p2">オフセット(上部レベル)</label></th><td><input id="p2" value="2500.0"></td><td></td></tr>
            <tr><th><label for="p3">基準レベル オフセット</label></th><td><input id="p3" value="0.0"></td><td></td></tr>
            <tr class="group"><th colspan="2">寸法</th><td><svg><use href="#upup"/></svg></td></tr>
            <tr class="off"><th>面積</th><td></td><td></td></tr>
            <tr class="off"><th>周長</th><td></td><td></td></tr>
            <tr class="off"><th>部屋高さ(レベル指定)</th><td>2500.0</td><td></td></tr>
            <tr class="off"><th>容積</th><td>計算されない</td><td></td></tr>
            <tr class="off"><th>算定高さ</th><td>0.0</td><td></td></tr>
            <tr class="group"><th colspan="2">識別情報</th><td><svg><use href="#upup"/></svg></td></tr>
            <tr><th><label for="p4">番号</label></th><td><input id="p4"></td><td></td></tr>
            <tr><th><label for="p5">名前</label></th><td><input id="p5"></td><td></td></tr>
            <tr><th><label for="p6">イメージ</label></th><td><input id="p6"></td><td></td></tr>
            <tr><th><label for="p7">コメント</label></th><td><input id="p7"></td><td></td></tr>
            <tr><th><label for="p8">用途</label></th><td><input id="p8"></td><td></td></tr>
            <tr><th><label for="p9">部署</label></th><td><input id="p9"></td><td></td></tr>
            <tr><th><label for="p10">仕上 幅木</label></th><td><input id="p10"></td><td></td></tr>
            <tr><th><label for="p11">仕上 天井</label></th><td><input id="p11"></td><td></td></tr>
            <tr><th><label for="p12">仕上 壁</label></th><td><input id="p12"></td><td></td></tr>
            <tr><th><label for="p13">仕上 床</label></th><td><input id="p13"></td><td></td></tr>
            <tr><th><label for="p14">占有者</label></th><td><input id="p14"></td><td><button class="assoc" aria-label="占有者を関連付け"></button></td></tr>
            <tr><th><label for="p15">幅木</label></th><td><input id="p15"></td><td><button class="assoc" aria-label="幅木を関連付け"></button></td></tr>
            <tr><th><label for="p16">廻縁</label></th><td><input id="p16"></td><td><button class="assoc" aria-label="廻縁を関連付け"></button></td></tr>
            <tr class="group"><th colspan="2">フェーズ</th><td><svg><use href="#upup"/></svg></td></tr>
            <tr class="off"><th>フェーズ</th><td>新しい建設</td><td></td></tr>
          </tbody>
        </table>
      </div>
      <footer class="props-foot"><a href="#help">プロパティ ヘルプ</a><button disabled>適用</button></footer>
      <!-- Pointer highlight -->
      <span class="spot"></span>
      <svg class="pointer"><use href="#cursor"/></svg>
    </aside>
  </main>

  <!-- Status bar -->
  <footer class="status">
    <span class="status-text">通芯 : 通芯 : 2</span>
    <svg width="20" height="20" viewBox="0 0 20 20"><path d="M6 2l4-2 4 2v5l-4 2-4-2z" fill="#5cb85c" stroke="#2a6b2a"/><path d="M1 9l4-2 5 2v8l-5 2-4-2z" fill="#a8d8f6" stroke="#2f6ea8" stroke-width="1.300"/><path d="M13 8q3-2 5 1v2l-1 2v6h-3v-6l-2-2z" fill="#cfe0f2" stroke="#456"/></svg>
    <select class="workset" aria-label="ワークセット"><option></option></select>
    <svg width="18" height="20" viewBox="0 0 18 20"><path d="M4 1h13v4l-5 5H8L7 6H4zM1 19l3-7h4l2 7z" fill="#bbb" stroke="#999"/></svg>
    <span class="count">:0</span>
    <svg class="mid" width="19" height="20" viewBox="0 0 19 20"><path d="M1 2h17v16H1z" fill="#eef" stroke="#345" stroke-width="1.600"/><path d="M1 3h17" stroke="#345" stroke-width="3"/><circle cx="4.500" cy="8" r="1.500" fill="#345"/><path d="M8 8h8M8 11h7M8 15h7M5 11v4" stroke="#345" stroke-width="1.500"/></svg>
    <svg width="18" height="18" viewBox="0 0 18 18"><path d="M4 1h13v16H4z" fill="#999"/><path d="M0 2q1 7 8 7V6l6 5-6 5v-3Q1 13 0 2z" fill="#c4c4c4" stroke="#888"/></svg>
    <select class="option-set" aria-label="デザイン オプション"><option>メイン モデル</option></select>
    <div class="sel-icons">
      <svg viewBox="0 0 20 20"><rect x="1" y="3" width="8" height="6" rx="3" fill="#fbe08a" stroke="#c98c10" stroke-width="2"/><rect x="10" y="3" width="8" height="6" rx="3" fill="#fbe08a" stroke="#c98c10" stroke-width="2"/><use href="#cursor" x="7" y="5" width="9" height="15"/></svg>
      <svg viewBox="0 0 20 20"><path d="M1 14L9 4l3 10zM1 17h12" fill="#fff" stroke="#2f7fca" stroke-width="1.500"/><use href="#redx" x="10" y="1" width="9" height="8"/><use href="#cursor" x="10" y="7" width="8" height="13"/></svg>
      <svg viewBox="0 0 20 20"><path d="M2 1h10v4H9l4 5H2l2-5H2z" fill="#f7a35c" stroke="#c2501a" stroke-width="1.300"/><path d="M7 10v8" stroke="#666" stroke-width="1.500"/><use href="#cursor" x="9" y="7" width="8" height="13"/></svg>
      <svg viewBox="0 0 20 20"><path d="M1 4l10-2v13L1 18z" fill="#8cc6f2" stroke="#2f6ea8" stroke-width="1.300"/><use href="#redx" x="10" y="1" width="9" height="8"/><use href="#cursor" x="9" y="7" width="8" height="13"/></svg>
      <svg viewBox="0 0 20 20"><path d="M7 1v12M1 7h12M5 3l2-2 2 2M5 11l2 2 2-2M3 5L1 7l2 2" fill="none" stroke="#333" stroke-width="1.300"/><use href="#cursor" x="10" y="6" width="9" height="14"/></svg>
      <svg viewBox="0 0 20 20"><circle cx="10" cy="10" r="6" fill="none" stroke="#999" stroke-width="4" stroke-dasharray="4 1"/></svg>
      <svg viewBox="0 0 32 30"><use href="#funnel"/></svg>
      <span>:2</span>
    </div>
  </footer>

  <!-- Windows taskbar -->
  <footer class="taskbar">
    <button aria-label="スタート"><svg viewBox="0 0 24 24" width="22" height="22" fill="#fff"><path d="M2 5l8-1v7H2zM11 4l11-1v8H11zM2 12h8v7l-8-1zM11 12h11v9l-11-2z"/></svg></button>
    <button aria-label="Cortana"><svg viewBox="0 0 24 24" width="24" height="24"><circle cx="12" cy="12" r="8.500" fill="none" stroke="#fff" stroke-width="2.200"/></svg></button>
    <button aria-label="タスク ビュー"><svg viewBox="0 0 24 24" width="24" height="24" fill="none" stroke="#fff" stroke-width="1.600"><path d="M3 3v4h12V3M3 21v-4h12v4M3 9h12v6H3zM20 3v18"/><path d="M18 8h4v4h-4z" fill="#fff" stroke="none"/></svg></button>
    <button class="folder" aria-label="エクスプローラー"><svg viewBox="0 0 28 24" width="28" height="24"><path d="M1 2h9l2 3h15v17H1z" fill="#e5a83b"/><path d="M1 7h26v15H1z" fill="#fbdf8f"/><path d="M6 14h16v8h-4v-4h-8v4H6z" fill="#3f9bd8"/></svg></button>
    <button class="open" aria-label="録画"><svg viewBox="0 0 28 28" width="28" height="28"><circle cx="14" cy="14" r="13" fill="#fff200"/></svg></button>
    <button class="open" aria-label="OBS"><svg viewBox="0 0 28 28" width="28" height="28"><circle cx="14" cy="14" r="12" fill="#222" stroke="#ddd" stroke-width="1.600"/><path d="M13 5q-5 4 0 8M23 15q-5-4-8 1M8 21q6 1 6-5" fill="none" stroke="#ddd" stroke-width="2.500"/></svg></button>
    <button class="open active" aria-label="Revit"><span class="revit-tile"><svg viewBox="0 0 24 30" width="24" height="30"><text x="3" y="24" class="logo-r">R</text></svg></span></button>
    <div class="tray">
      <svg viewBox="0 0 20 20"><path d="M3 13l7-7 7 7" fill="none" stroke="#fff" stroke-width="1.600"/></svg>
      <svg viewBox="0 0 20 20" fill="#fff"><path d="M5 1l5 3-5 3-5-3zM15 1l5 3-5 3-5-3zM5 8l5 3-5 3-5-3zM15 8l5 3-5 3-5-3zM10 13l4 3-4 3-4-3z"/></svg>
      <svg class="kbd" viewBox="0 0 28 20"><path d="M1 3h26v14H1z" fill="none" stroke="#fff" stroke-width="1.800"/><path d="M4 6.500h20M4 10h20" stroke="#fff" stroke-width="2" stroke-dasharray="2 1"/><path d="M7 13.500h14" stroke="#fff" stroke-width="1.600"/></svg>
      <span>A</span>
      <div class="notice"><svg viewBox="0 0 22 22"><path d="M1 1h20v16H10l-4 4v-4H1z" fill="#fff"/><path d="M5 6h12M5 10h12" stroke="#04131a" stroke-width="1.500"/></svg><b>13</b></div>
    </div>
  </footer>
</div>

<div class="banner">用途別に着色する</div>

</body>
</html>
```

FILE: styles.css
```css
* { box-sizing: border-box; }
body {
  margin: 0;
  background: #fff;
  color: #444;
  font: 14px/20px "Noto Sans", "Noto Sans CJK JP", sans-serif;
  font-feature-settings: "palt"; /* proportional kana */
}
h1, h2 { margin: 0; font-size: 14px; font-weight: 400; }
button {
  padding: 0;
  border: 0;
  background: none;
  color: inherit;
  font: inherit;
  font-feature-settings: inherit;
}
svg { flex: none; }
.defs { position: absolute; width: 0; height: 0; }
.fw { font-feature-settings: normal; }

.app {
  display: flex;
  flex-direction: column;
  height: 100vh;
  margin: 0 150px;
  background: #cbcbcb;
  overflow: hidden;
}

/* Title bar */
.titlebar {
  display: flex;
  align-items: center;
  height: 32px;
}
.qat {
  display: grid;
  grid-template-columns: 32px 26px 36px 10px 34px 8px 36px 8px 12px 26px 14px 30px 30px 24px 14px 24px 14px 30px 28px 10px 26px 30px 8px 28px;
  place-items: center;
}
.qat button { display: flex; align-items: center; justify-content: center; }
.qat svg { width: 20px; height: 20px; }
.qat .logo { width: 24px; height: 30px; }
.qat .arr svg { width: 6px; height: 4px; }
.qat .dim { color: #888; }
.qat .sep { width: 1px; height: 26px; background: #b3b3b3; }
.qat .letter { font: bold 22px/24px "Liberation Sans", sans-serif; }
.logo-r { font: bold 26px/26px "Liberation Sans", sans-serif; fill: #1c67ad; }
.doc-title { flex: 1; padding-left: 77px; line-height: 26px; white-space: nowrap; }
.search { display: flex; align-items: center; gap: 6px; margin-right: 386px; }

/* Ribbon tabs */
.tabs {
  display: grid;
  grid-template-columns: 64px repeat(7, 52px) 94px 84px 52px 52px 68px 97px 90px 82px;
  align-items: end;
  height: 28px;
  padding-left: 2px;
  white-space: nowrap;
}
.tabs button { height: 24px; }
.tabs .file { width: 62px; background: #1c77b4; color: #fff; }
.tabs .current { background: #e3edd6; }
.ribbon-toggle { display: flex; align-items: center; justify-content: center; }

/* Ribbon */
.ribbon {
  display: flex;
  gap: 1px;
  height: 113px;
  background: #e3edd6;
  border-bottom: 1px solid #c9cdc4;
}
.panel {
  display: flex;
  flex-direction: column;
  background: #eee;
}
.panel h2 {
  display: flex;
  align-items: center;
  justify-content: center;
  gap: 8px;
  height: 24px;
  white-space: nowrap;
}
.tools { display: flex; height: 89px; padding-top: 3px; }
.tools.center { align-items: center; justify-content: center; }
.w28 { width: 28px; } .w29 { width: 29px; } .w30 { width: 30px; } .w36 { width: 36px; }
.w42 { width: 42px; } .w45 { width: 45px; } .w99 { width: 99px; }
.w60 { width: 60px; } .w64 { width: 64px; } .w65 { width: 65px; } .w76 { width: 76px; }
.w98 { width: 98px; } .w108 { width: 108px; } .w128 { width: 128px; }
.w178 { width: 178px; } .w281 { width: 281px; }
.pad8 .tools { padding-left: 8px; }
.tri { width: 10px; height: 6px; }
.car { width: 6px; height: 4px; }
.modify {
  display: flex;
  flex-direction: column;
  align-items: center;
  gap: 10px;
  width: 46px;
  height: 85px;
  padding-top: 8px;
  background: linear-gradient(#b9d7f5, #9cc5f0);
  border: 1px solid #3b78c0;
}
.paste, .filter {
  display: flex;
  flex-direction: column;
  align-items: center;
  width: 64px;
  margin-left: 6px;
  padding-top: 4px;
  gap: 4px;
}
.paste { color: #aaa; }
.paste .tri { width: 6px; height: 4px; margin-top: 2px; color: #777; }
.filter { width: 46px; margin: 0; gap: 7px; padding-top: 9px; white-space: nowrap; }
.col, .col2 { display: flex; flex-direction: column; height: 86px; }
.paste + .col { margin-left: 10px; }
.col > *, .col2 > * { flex: 1; display: flex; align-items: center; gap: 6px; white-space: nowrap; }
.col svg:first-child { width: 20px; height: 20px; }
.tools.col2 { align-items: center; }
.tools.col2 > * { flex: none; width: 46px; height: 42px; justify-content: center; }
.on { background: #b5d3f3; border: 1px solid #3b78c0; }
.big8 {
  display: grid;
  grid-template-columns: 47px 47px 46px 48px;
  grid-template-rows: 42px 42px;
  align-items: center;
}
.big8 svg, .measure svg:first-child { width: 36px; height: 36px; }
.big8 button { text-align: left; line-height: 0; }
.last { margin-left: 4px; background: none; }
.last .tools { background: #eee; }
.selset { margin-left: 7px; padding-left: 12px; border-left: 1px solid #ccc; }
.selset button:disabled { color: #aaa; }

.optionsbar {
  height: 31px;
  padding: 6px 12px 0;
  background: #e3edd6;
}

/* Work area */
.work {
  display: flex;
  flex: 1;
  min-height: 0;
  padding-top: 2px;
  background: #c8c8c8;
}
.pane-head {
  display: flex;
  align-items: center;
  justify-content: space-between;
  height: 24px;
  padding: 0 3px 0 5px;
  background: #eee;
  white-space: nowrap;
}
.pane-head h2 { color: #555; }
.x { width: 12px; height: 12px; color: #111; display: block; }

.browser { width: 331px; background: #fff; border-right: 2px solid #eee; }
.tree {
  display: flex;
  flex-direction: column;
  height: 564px;
  margin: 1px 0 0;
  padding: 0;
  list-style: none;
}
.tree li { display: flex; flex: 1; align-items: center; white-space: nowrap; line-height: 20px; }
.tree i {
  display: flex;
  align-items: center;
  justify-content: center;
  align-self: stretch;
  flex: none;
  width: 24px;
}
.tree i:last-of-type { margin-right: 5px; }
.tree i:has(+ .ti) { margin-right: 3px; }
.tree .v { background: linear-gradient(#e2e2e2, #e2e2e2) 12px 0 / 1px 100% no-repeat; }
.tree .h { background: linear-gradient(#e2e2e2, #e2e2e2) 12px 0 / 1px 100% no-repeat, linear-gradient(#e2e2e2, #e2e2e2) 12px 50% / 12px 1px no-repeat; }
.tree .e { background: linear-gradient(#e2e2e2, #e2e2e2) 12px 0 / 1px 50% no-repeat, linear-gradient(#e2e2e2, #e2e2e2) 12px 50% / 12px 1px no-repeat; }
.tree button {
  width: 11px;
  height: 11px;
  border: 1px solid #b5b5b5;
  background: #f4f4f4;
  color: #1c3f94;
  font: bold 12px/8px "Liberation Sans", sans-serif;
}
.tree .ti { width: 18px; height: 18px; margin-right: 5px; }
.tree b { margin-left: -2px; padding: 0 2px; background: #e0e0e0; color: #222; }

/* Drawing view */
.view {
  display: flex;
  flex: 1;
  flex-direction: column;
  min-width: 0;
  margin: 0 4px 0 3px;
  background: #fff;
}
.view-tabs { display: flex; justify-content: space-between; align-items: center; height: 24px; background: #c9c9c9; }
.view-tab {
  display: flex;
  align-items: center;
  gap: 8px;
  height: 24px;
  padding: 0 6px 0 5px;
  background: #fff;
  color: #222;
  white-space: nowrap;
}
.tab-list { margin-right: 5px; }
.view-body { display: flex; flex: 1; min-height: 0; }
.canvas { position: relative; flex: 1; min-width: 0; }
.plan { display: block; width: 100%; height: 100%; }
.navbar {
  position: absolute;
  top: 3px;
  right: 1px;
  height: 130px;
  border: 1px solid #bbb;
  border-radius: 3px;
  background: #f4f4f4;
}
.two-d { font: bold 12px "Liberation Sans", sans-serif; fill: #6a93c0; stroke: none; text-anchor: middle; }
.vscroll {
  display: flex;
  flex-direction: column;
  align-items: center;
  justify-content: space-between;
  width: 19px;
  margin: 3px 1px 0 0;
  padding: 8px 0;
  background: #eee;
}
.vscroll span { width: 19px; height: 20px; background: #c9c9c9; }
.vscroll svg, .hscroll svg { width: 8px; height: 8px; fill: none; stroke: #333; stroke-width: 1.5; }

/* Dashes: long, gap, short, gap */
.grid { fill: none; stroke: #999; stroke-dasharray: 76 19 18 20.3; }
.grid.red { stroke: #d8392e; stroke-width: 1.5; }
.thin { fill: none; stroke: #333; stroke-width: 1; stroke-opacity: .6; }
.diag { fill: none; stroke: #e8301c; stroke-opacity: .7; }
.wall { fill: #000; }
.bound { fill: none; stroke: #f01c0c; stroke-width: 2.5; }
.frame { fill: none; stroke: #fff; stroke-width: 11; }
.plan text { text-anchor: middle; font-family: "Liberation Sans", "Noto Sans CJK JP", sans-serif; }
.plan .tag { font-size: 26px; }
.plan .area { font-size: 16px; }
.plan .up { font-size: 16px; }
.plan .bubble { font-size: 37px; }
.plan .section { font-size: 17px; text-anchor: start; }
.plan .caption {
  font-size: 61px;
  font-weight: 400;
  font-feature-settings: normal;
  fill: #f00;
  stroke: #f00;
  stroke-width: 2;
}

.viewbar { display: flex; align-items: center; height: 21px; margin-bottom: 2px; background: #eee; color: #222; }
.scale { width: 105px; padding-left: 35px; font-size: 13px; white-space: nowrap; }
.view-icons { display: flex; gap: 7px; }
.view-icons svg { width: 20px; height: 18px; }
.hscroll { display: flex; flex: 1; align-items: center; justify-content: space-between; margin-left: 8px; }
.hscroll span { width: 20px; height: 21px; background: #c9c9c9; }
.grip { margin: 6px 4px 0 12px; }

/* Properties */
.props {
  position: relative;
  display: flex;
  flex-direction: column;
  width: 354px;
  padding: 0 2px;
  background: #eee;
}
.type-selector {
  display: flex;
  align-items: center;
  height: 87px;
  padding: 0 1px 0 3px;
  border-top: 2px solid #888;
  border-bottom: 2px solid #888;
  background: linear-gradient(#f7f7f7, #e6e6e6);
  color: #aaa;
  text-align: left;
}
.thumb { width: 78px; height: 78px; margin-right: 6px; border: 1px solid #ddd; }
.type-name { flex: 1; font-size: 13px; }
.type-selector .tri { color: #888; }
.filter-row { display: flex; height: 25px; padding: 1px 0; }
.filter-row button { display: flex; flex: 1; align-items: center; gap: 3px; padding-left: 3px; background: #f3f3f3; color: #aaa; font-size: 13px; white-space: nowrap; }
select {
  appearance: none;
  padding: 0 3px;
  border: 1px solid #d0d0d0;
  border-radius: 0;
  background: #e4e4e4 url("data:image/svg+xml,%3Csvg xmlns='http://www.w3.org/2000/svg' width='8' height='5'%3E%3Cpath d='M0 0l4 4 4-4' fill='none' stroke='%23777'/%3E%3C/svg%3E") right 5px center no-repeat;
  color: #444;
  font: inherit;
  font-feature-settings: inherit;
}
.filter-row select { width: 270px; }
.prop-list { flex: 1; min-height: 0; background: #fff; }
.prop-list table {
  width: 100%;
  height: 608px;
  table-layout: fixed;
  border-collapse: collapse;
  line-height: 20px;
}
.c-name { width: 168px; }
.c-btn { width: 15px; }
.prop-list th, .prop-list td { padding: 0 0 0 2px; border: 1px solid #ddd; border-width: 0 1px 1px 0; text-align: left; font-weight: 400; white-space: nowrap; }
.prop-list th { padding-left: 10px; }
.prop-list .group th { padding-left: 2px; }
.prop-list .group > * { background: #d9d9d9; border-color: #d9d9d9; }
.prop-list .group td { vertical-align: top; }
.prop-list .group svg { display: block; width: 6px; height: 8px; margin-left: 6px; }
.prop-list .off > * { color: #8a8a8a; }
.prop-list .active { box-shadow: inset 0 0 0 1px #888; }
.prop-list input { display: block; width: 100%; height: 20px; padding: 0; border: 0; background: none; color: inherit; font: inherit; }
.prop-list td:last-child { padding: 0; border-right: 0; }
.assoc { display: block; width: 14px; height: 21px; border: 1px solid #b5b5b5; background: #e0e0e0; }
.props-foot { display: flex; justify-content: space-between; height: 29px; }
.props-foot a { color: #2a74c8; }
.props-foot button { width: 95px; height: 24px; margin-top: 1px; background: #c9c9c9; color: #8a8a8a; }
.spot { position: absolute; top: 516px; left: 161px; width: 23px; height: 23px; border-radius: 50%; background: #fff01e; }
.pointer { position: absolute; top: 529px; left: 195px; width: 16px; height: 24px; opacity: .7; }

/* Status bar */
.status { display: flex; align-items: center; height: 29px; white-space: nowrap; }
.status select { height: 20px; margin: 0 6px 6px 5px; border: 0; background-color: #fff; color: #888; }
.status-text { width: 539px; padding-left: 2px; }
.workset { width: 241px; }
.option-set { width: 241px; }
.count { margin: 4px 15px 0 4px; }
.mid { margin-right: 7px; }
.sel-icons { display: flex; align-items: center; gap: 6px; margin-left: auto; padding-right: 41px; }
.sel-icons svg { width: 20px; height: 20px; }
.sel-icons span { margin-left: -8px; }

/* Taskbar */
.taskbar { display: flex; height: 48px; background: #04131a; color: #fff; }
.taskbar > button { display: flex; align-items: center; justify-content: center; width: 57px; border-bottom: 3px solid transparent; padding-top: 3px; }
.taskbar .folder { width: 60px; }
.taskbar .open { width: 48px; margin: 0 5px; border-bottom-color: #8fd2ee; }
.taskbar .active { width: 57px; margin: 0; background: #3a474c; }
.revit-tile { display: flex; align-items: center; justify-content: center; width: 29px; height: 30px; background: #e4effa; }
.tray { display: flex; align-items: center; gap: 18px; margin-left: auto; padding-right: 22px; border-right: 1px solid #38444a; margin-right: 6px; }
.tray svg { width: 20px; height: 20px; }
.tray .kbd { width: 28px; }
.tray span { font-size: 20px; }
.notice { position: relative; display: flex; }
.notice b {
  position: absolute;
  top: 8px;
  left: 8px;
  width: 20px;
  height: 20px;
  border: 1px solid #888;
  border-radius: 50%;
  background: #333;
  font-size: 11px;
  line-height: 18px;
  text-align: center;
}

/* Lesson title over the window */
.banner {
  position: absolute;
  top: 0;
  right: 0;
  width: 534px;
  height: 58px;
  padding-left: 12px;
  background: #2e4294;
  color: #fff;
  font: 700 30px/52px "Noto Sans CJK JP", sans-serif;
  font-feature-settings: normal;
  text-align: center;
}
```
